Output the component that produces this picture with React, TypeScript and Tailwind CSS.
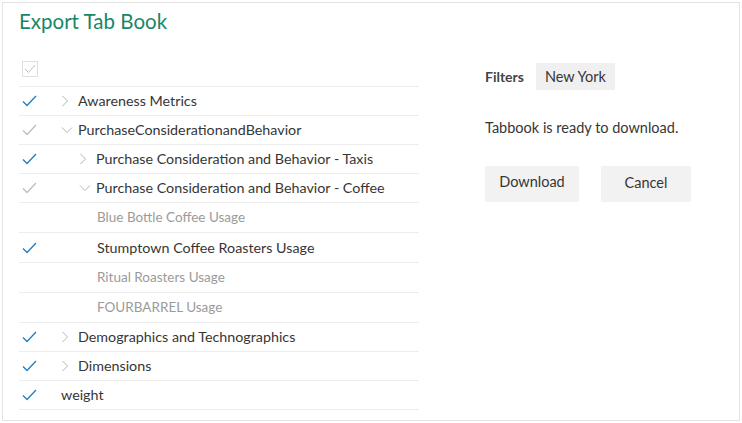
import React from 'react';

type Row = {
  label: string;
  level: 0 | 1 | 2;
  check: 'on' | 'off' | 'none';
  chevron?: 'right' | 'down';
  muted?: boolean;
};

const ROWS: Row[] = [
  { label: 'Awareness Metrics', level: 0, check: 'on', chevron: 'right' },
  { label: 'PurchaseConsiderationandBehavior', level: 0, check: 'off', chevron: 'down' },
  { label: 'Purchase Consideration and Behavior - Taxis', level: 1, check: 'on', chevron: 'right' },
  { label: 'Purchase Consideration and Behavior - Coffee', level: 1, check: 'off', chevron: 'down' },
  { label: 'Blue Bottle Coffee Usage', level: 2, check: 'none', muted: true },
  { label: 'Stumptown Coffee Roasters Usage', level: 2, check: 'on' },
  { label: 'Ritual Roasters Usage', level: 2, check: 'none', muted: true },
  { label: 'FOURBARREL Usage', level: 2, check: 'none', muted: true },
  { label: 'Demographics and Technographics', level: 0, check: 'on', chevron: 'right' },
  { label: 'Dimensions', level: 0, check: 'on', chevron: 'right' },
  { label: 'weight', level: 0, check: 'on' },
];

function Check({ color }: { color: string }) {
  return (
    <svg width="15" height="12" viewBox="0 0 15 12" fill="none">
      <polyline points="1,6.5 5,10.5 14,1" stroke={color} strokeWidth="1.3" strokeLinejoin="round" />
    </svg>
  );
}

function Chevron({ dir }: { dir: 'right' | 'down' }) {
  return dir === 'right' ? (
    <svg width="8" height="12" viewBox="0 0 8 12" fill="none">
      <polyline points="1.5,1 6.5,6 1.5,11" stroke="#b5b5b5" strokeWidth="1" />
    </svg>
  ) : (
    <svg width="12" height="8" viewBox="0 0 12 8" fill="none">
      <polyline points="1,1.5 6,6.5 11,1.5" stroke="#b5b5b5" strokeWidth="1" />
    </svg>
  );
}

function TreeRow({ row }: { row: Row }) {
  const indent = row.level === 0 ? 'pl-[20px]' : row.level === 1 ? 'pl-[38px]' : 'pl-[56px]';
  const height = row.level === 2 ? 'h-[30px]' : 'h-[29px]';
  return (
    <div className={`flex items-center ${height} border-b border-[#ececec]`}>
      <div className="w-[22px] pl-[3px] shrink-0 flex items-center">
        {row.check === 'on' && <Check color="#1f7bc1" />}
        {row.check === 'off' && <Check color="#bdbdbd" />}
      </div>
      <div className={`flex items-center ${indent}`}>
        {row.chevron && (
          <span className="w-[17px] flex items-center justify-start">
            <Chevron dir={row.chevron} />
          </span>
        )}
        <span className={row.muted ? 'text-[#9b9b9b] text-[13.5px]' : 'text-[#363636] text-[14.3px]'}>{row.label}</span>
      </div>
    </div>
  );
}

export default function App() {
  return (
    <div className="p-[2px] bg-white" style={{ fontFamily: 'Lato, "Open Sans", sans-serif' }}>
      <div className="border border-[#e3e3e3] h-[419px] pl-[16px] pr-4 pt-[4px]">
        <h1 className="text-[20.5px] text-[#17876a] leading-[28px]">Export Tab Book</h1>

        <div className="flex mt-[26px]">
          {/* tree */}
          <div className="w-[400px]">
            <div className="h-[26px] border-b border-[#ececec] pl-[3px] flex items-start">
              <div className="w-4 h-4 border border-[#e0e0e0] flex items-center justify-center">
                <svg width="12" height="10" viewBox="0 0 12 10" fill="none">
                  <polyline points="1,5 4.5,8.5 11,1" stroke="#bdbdbd" strokeWidth="1" />
                </svg>
              </div>
            </div>
            {ROWS.map((r) => (
              <TreeRow key={r.label} row={r} />
            ))}
          </div>

          {/* right panel */}
          <div className="pl-[66px] text-[14.5px] text-[#363636]">
            <div className="flex items-center gap-[12px] mt-[2px]">
              <span className="font-bold text-[#444] text-[14px]">Filters</span>
              <span className="bg-[#f0f0f0] px-[9px] h-[27px] flex items-center">New York</span>
            </div>
            <p className="mt-[27px]">Tabbook is ready to download.</p>
            <div className="flex gap-[22px] mt-[27px]">
              <button className="bg-[#f2f2f2] w-[94px] h-[36px] pb-[3px]">Download</button>
              <button className="bg-[#f2f2f2] w-[90px] h-[36px] pb-[1px]">Cancel</button>
            </div>
          </div>
        </div>
      </div>
    </div>
  );
}
